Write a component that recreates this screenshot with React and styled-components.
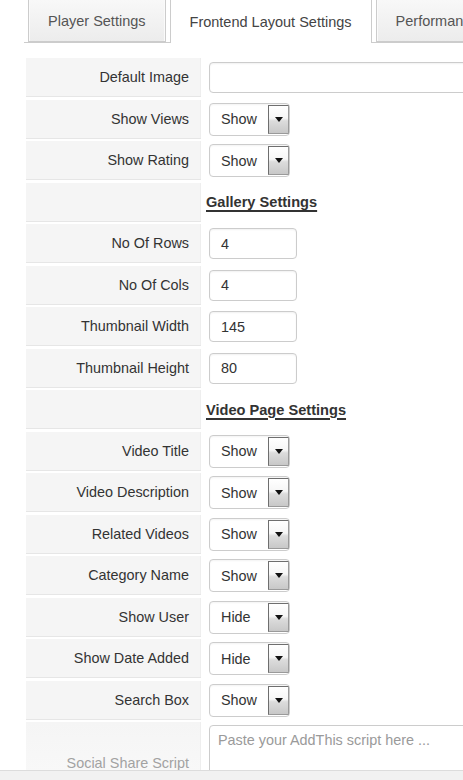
import styled, { createGlobalStyle } from "styled-components";

//기본 페이지 스타일
const GlobalStyle = createGlobalStyle`
    html, body {
        margin: 0;
        padding: 0;
        background: #fff;
        overflow: hidden;
    }
    body {
        font-family: "Liberation Sans", Arial, sans-serif;
        color: #333;
    }
`;

const Page = styled.div`
    width: 463px;
    height: 780px;
    padding-left: 24px;
    box-sizing: border-box;
    overflow: hidden;
`;

//탭 영역
const TabBar = styled.div`
    display: flex;
    gap: 4px;
    padding-left: 4px;
    height: 42px;
    border-bottom: 1px solid #ccc;
    white-space: nowrap;
`;

const Tab = styled.div`
    flex-shrink: 0;
    display: flex;
    align-items: center;
    padding: 0 19px;
    height: ${props => (props.$active ? "43px" : "42px")};
    margin-bottom: ${props => (props.$active ? "-1px" : "0")};
    border: 1px solid #ccc;
    border-top: none;
    border-bottom: ${props => (props.$active ? "none" : "1px solid #ccc")};
    box-sizing: border-box;
    background: ${props => (props.$active ? "#fff" : "linear-gradient(#f8f8f8, #ececec)")};
    box-shadow: ${props => (props.$active ? "none" : "inset -1px 0 0 #fafafa, inset 1px 0 0 #fafafa")};
    font-size: 14.5px;
    color: ${props => (props.$active ? "#444" : "#555")};
    position: relative;
    z-index: ${props => (props.$active ? 1 : 0)};
`;

//설정 행 목록
const Rows = styled.div`
    display: flex;
    flex-direction: column;
    gap: 2.5px;
    margin: 15px 0 0 2px;
`;

const Row = styled.div`
    display: grid;
    grid-template-columns: 175px 1fr;
    column-gap: 2px;
    height: ${props => props.$height || "39px"};
`;

const LabelCell = styled.div`
    display: flex;
    align-items: center;
    justify-content: flex-end;
    padding-right: 12px;
    box-sizing: border-box;
    background: ${props => (props.$fade ? "linear-gradient(#f5f5f5, #fafafa)" : "#f5f5f5")};
    border-bottom: 1px solid #e6e6e6;
    box-shadow: inset -1px 0 0 #eeeeee;
    font-size: 14.4px;
    color: ${props => (props.$fade ? "#a2a2a2" : "#333")};
`;

const ValueCell = styled.div`
    display: flex;
    align-items: ${props => (props.$top ? "flex-start" : "center")};
    padding-left: ${props => props.$pad || "6px"};
    white-space: nowrap;
`;

const SectionTitle = styled.span`
    font-size: 14.6px;
    font-weight: bold;
    color: #333;
    text-decoration: underline;
    text-decoration-thickness: 2px;
    text-underline-offset: 3px;
`;

const TextInput = styled.div`
    flex-shrink: 0;
    width: ${props => props.$width || "88px"};
    height: 31px;
    box-sizing: border-box;
    border: 1px solid #ccc;
    border-radius: 4px;
    padding: 0 11px;
    display: flex;
    align-items: center;
    font-size: 14.4px;
    color: #333;
    background: #fff;
    box-shadow: inset 0 1px 2px rgba(0, 0, 0, 0.06);
`;

const SelectBox = styled.div`
    flex-shrink: 0;
    width: 81px;
    height: 33px;
    box-sizing: border-box;
    border: 1px solid #ccc;
    border-radius: 4px;
    display: flex;
    align-items: stretch;
    background: #fff;
    box-shadow: inset 0 1px 2px rgba(0, 0, 0, 0.05);
    overflow: hidden;
`;

const SelectText = styled.span`
    flex: 1;
    display: flex;
    align-items: center;
    padding-left: 11px;
    font-size: 14.4px;
    color: #333;
`;

const DropButton = styled.span`
    width: 21px;
    margin: 1px 0 1px 0;
    box-sizing: border-box;
    border: 1px solid #6e6e6e;
    border-right-color: #9a9a9a;
    border-bottom-color: #9a9a9a;
    background: linear-gradient(#ffffff 0%, #f6f6f6 45%, #dcdcdc 55%, #c8c8c8 100%);
    display: flex;
    align-items: center;
    justify-content: center;
`;

const TextArea = styled.div`
    flex-shrink: 0;
    width: 300px;
    height: 80px;
    margin-top: 3px;
    box-sizing: border-box;
    border: 1px solid #ccc;
    border-radius: 4px;
    padding: 6px 8px;
    font-size: 14.4px;
    color: #9a9a9a;
    background: #fff;
`;

const BottomBar = styled.div`
    position: fixed;
    left: 0;
    right: 0;
    bottom: 0;
    height: 9px;
    background: #f1f1f1;
    border-top: 1px solid #dcdcdc;
`;

function Select({ value }) {
    return (
        <SelectBox>
            <SelectText>{value}</SelectText>
            <DropButton>
                <svg width="8" height="5" viewBox="0 0 8 5">
                    <path d="M0 0 H8 L4 5 Z" fill="#111" />
                </svg>
            </DropButton>
        </SelectBox>
    );
}

const rows = [
    { label: "Default Image", type: "input", value: "", width: "300px" },
    { label: "Show Views", type: "select", value: "Show" },
    { label: "Show Rating", type: "select", value: "Show" },
    { type: "header", value: "Gallery Settings" },
    { label: "No Of Rows", type: "input", value: "4" },
    { label: "No Of Cols", type: "input", value: "4" },
    { label: "Thumbnail Width", type: "input", value: "145" },
    { label: "Thumbnail Height", type: "input", value: "80" },
    { type: "header", value: "Video Page Settings" },
    { label: "Video Title", type: "select", value: "Show" },
    { label: "Video Description", type: "select", value: "Show" },
    { label: "Related Videos", type: "select", value: "Show" },
    { label: "Category Name", type: "select", value: "Show" },
    { label: "Show User", type: "select", value: "Hide" },
    { label: "Show Date Added", type: "select", value: "Hide" },
    { label: "Search Box", type: "select", value: "Show" },
];

export default function App() {
    return (
        <>
            <GlobalStyle />
            <Page>
                <TabBar>
                    <Tab>Player Settings</Tab>
                    <Tab $active>Frontend Layout Settings</Tab>
                    <Tab>Performance Settings</Tab>
                </TabBar>
                <Rows>
                    {rows.map((row, i) => (
                        <Row key={i}>
                            <LabelCell>{row.label}</LabelCell>
                            {row.type === "header" && (
                                <ValueCell $pad="3px">
                                    <SectionTitle>{row.value}</SectionTitle>
                                </ValueCell>
                            )}
                            {row.type === "input" && (
                                <ValueCell>
                                    <TextInput $width={row.width}>{row.value}</TextInput>
                                </ValueCell>
                            )}
                            {row.type === "select" && (
                                <ValueCell>
                                    <Select value={row.value} />
                                </ValueCell>
                            )}
                        </Row>
                    ))}
                    <Row $height="82px">
                        <LabelCell $fade>Social Share Script</LabelCell>
                        <ValueCell $top>
                            <TextArea>Paste your AddThis script here ...</TextArea>
                        </ValueCell>
                    </Row>
                </Rows>
            </Page>
            <BottomBar />
        </>
    );
}
